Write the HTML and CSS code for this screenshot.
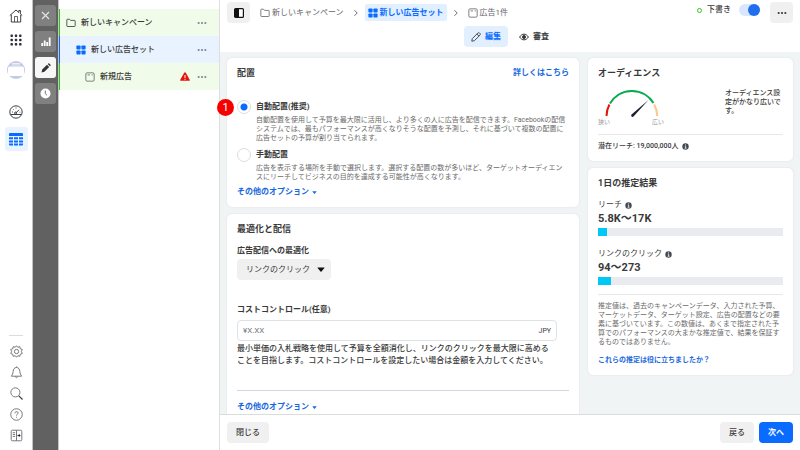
FILE: index.html
```html
<!DOCTYPE html>
<html lang="ja">

<head>
  <title>新しい広告セット</title>
  <meta charset="utf-8" />
  <meta name="viewport" content="width=device-width, initial-scale=1.0" />
  <link rel="stylesheet" href="styles.css">
</head>

<body>
  <svg class="sprite" aria-hidden="true">
    <symbol id="i-folder" viewBox="0 0 12 12">
      <path d="M1 9.5V2.2q0-.7.7-.7h2.6l1.2 1.4h4.8q.7 0 .7.7v5.9q0 .7-.7.7H1.7Q1 10.200 1 9.500z" fill="none" stroke="currentColor" />
    </symbol>
    <symbol id="i-set" viewBox="0 0 12 12">
      <g fill="currentColor">
        <rect x=".5" y=".5" width="5" height="5" rx="1" />
        <rect x="6.500" y=".5" width="5" height="5" rx="1" />
        <rect x=".5" y="6.500" width="5" height="5" rx="1" />
        <rect x="6.500" y="6.500" width="5" height="5" rx="1" />
      </g>
    </symbol>
    <symbol id="i-ad" viewBox="0 0 12 12">
      <rect x="1" y="1" width="10" height="10" rx="1.500" fill="none" stroke="currentColor" />
      <path d="M3 3.500h3M8 3.500h1.500" stroke="currentColor" />
    </symbol>
    <symbol id="i-dots" viewBox="0 0 12 12">
      <g fill="currentColor">
        <circle cx="2" cy="6" r="1.300" />
        <circle cx="6" cy="6" r="1.300" />
        <circle cx="10" cy="6" r="1.300" />
      </g>
    </symbol>
    <symbol id="i-chevron" viewBox="0 0 6 10">
      <path d="M1 1.500L4.500 5 1 8.500" fill="none" stroke="currentColor" stroke-width="1.200" />
    </symbol>
    <symbol id="i-caret" viewBox="0 0 8 5">
      <path d="M.8.5h6.400q.6 0 .2.500L4.500 4.500q-.5.4-1 0L.6 1Q.2.500.8.5z" fill="currentColor" />
    </symbol>
    <symbol id="i-info" viewBox="0 0 12 12">
      <circle cx="6" cy="6" r="5.500" fill="#444950" />
      <path d="M6 2.300v1.700M4.800 5.300H6.300V9M4.500 9h3.200" stroke="#fff" stroke-width="1.300" fill="none" />
    </symbol>
  </svg>

  <nav class="rail">
    <a href="#" class="rail-item" aria-label="ホーム">
      <svg width="14" height="14" viewBox="0 0 14 14" fill="none" stroke="#3b3f45">
        <path d="M.8 6.500L7 1l2.800 2.500V1.500h1.600v3.400l1.800 1.600M2.300 5.800v7.200h9.400V5.800" />
        <path d="M5.500 13V7.500h3V13" stroke-width=".8" />
      </svg>
    </a>
    <a href="#" class="rail-item" aria-label="すべてのツール">
      <svg width="12" height="12" viewBox="0 0 12 12" fill="#2c3036">
        <rect x=".5" y=".5" width="2.400" height="2.400" rx=".6" />
        <rect x="4.800" y=".5" width="2.400" height="2.400" rx=".6" />
        <rect x="9.100" y=".5" width="2.400" height="2.400" rx=".6" />
        <rect x=".5" y="4.800" width="2.400" height="2.400" rx=".6" />
        <rect x="4.800" y="4.800" width="2.400" height="2.400" rx=".6" />
        <rect x="9.100" y="4.800" width="2.400" height="2.400" rx=".6" />
        <rect x=".5" y="9.100" width="2.400" height="2.400" rx=".6" />
        <rect x="4.800" y="9.100" width="2.400" height="2.400" rx=".6" />
        <rect x="9.100" y="9.100" width="2.400" height="2.400" rx=".6" />
      </svg>
    </a>
    <a href="#" class="rail-item rail-account" aria-label="アカウント">
      <svg width="20" height="20" viewBox="0 0 20 20">
        <circle cx="10" cy="10" r="9" fill="#c3cae3" />
        <path d="M6 3.500h8M6 5h8" stroke="#eef0f8" />
        <rect x="2" y="6.500" width="16" height="9.500" rx="1.500" fill="#fff" />
      </svg>
    </a>
    <a href="#" class="rail-item" aria-label="概要">
      <svg width="14" height="14" viewBox="0 0 14 14" fill="none" stroke="#3b3f45">
        <circle cx="7" cy="7" r="6.200" />
        <path d="M1.500 9.500h11M7 7.800l3-3" />
        <path d="M3 7h1M4 4l.7.7M7 2.500v1M10.500 7.200h.8" stroke-width=".9" />
        <circle cx="6.600" cy="8" r="1" />
      </svg>
    </a>
    <a href="#" class="rail-item rail-current" aria-label="キャンペーン" aria-current="page">
      <svg width="14" height="13" viewBox="0 0 14 13" fill="#0a6cff">
        <path d="M0 1q0-1 1-1h12q1 0 1 1v2H0z" />
        <path d="M0 4.300h4v2H0zM5 4.300h4v2H5zM10 4.300h4v2h-4zM0 7.400h4v2H0zM5 7.400h4v2H5zM10 7.400h4v2h-4zM0 10.500h4v2H1q-1 0-1-1zM5 10.500h4v2H5zM10 10.500h4v1q0 1-1 1h-3z" />
      </svg>
    </a>
    <div class="rail-bottom">
      <a href="#" class="rail-item" aria-label="設定">
        <svg width="13" height="13" viewBox="0 0 14 14" fill="none" stroke="#6b7078">
          <path d="M7 .8l1.400 1.700 2.200-.7.4 2.200 2.200.8-.9 2.200.9 2.200-2.200.8-.4 2.200-2.200-.7L7 13.200l-1.400-1.700-2.200.7-.4-2.200-2.200-.8.9-2.200-.9-2.200L3 4l.4-2.200 2.200.7z" stroke-linejoin="round" />
          <circle cx="7" cy="7" r="2.300" />
        </svg>
      </a>
      <a href="#" class="rail-item" aria-label="お知らせ">
        <svg width="13" height="13" viewBox="0 0 14 14" fill="none" stroke="#6b7078">
          <path d="M7 1.500C4.500 1.800 3.600 3.500 3.400 6 3.200 8.500 2.500 9 1.500 11h11c-1-2-1.700-2.500-1.900-5C10.400 3.500 9.500 1.800 7 1.500z" />
          <path d="M5.500 11.300q1.500 2.600 3 0M7 .5v1" />
        </svg>
      </a>
      <a href="#" class="rail-item" aria-label="検索">
        <svg width="13" height="13" viewBox="0 0 14 14" fill="none" stroke="#6b7078">
          <circle cx="5.800" cy="5.800" r="4.900" />
          <path d="M9.500 9.500l4 4" stroke="#3b3f45" stroke-width="1.300" />
        </svg>
      </a>
      <a href="#" class="rail-item" aria-label="ヘルプ">
        <svg width="13" height="13" viewBox="0 0 14 14" fill="none" stroke="#6b7078">
          <circle cx="7" cy="7" r="6.200" />
          <path d="M5.200 5.800C5.200 3.300 8.900 3.400 8.800 5.500 8.700 6.700 7 6.700 7 8.200M7 9.500v1" />
        </svg>
      </a>
      <a href="#" class="rail-item" aria-label="パネル">
        <svg width="13" height="13" viewBox="0 0 14 14" fill="none" stroke="#6b7078">
          <rect x="1.300" y="1.300" width="11.400" height="11.400" rx="1.200" />
          <path d="M7 1.500v11M3 4h2.500M3 6h2.500M3 8h2.500" />
          <path d="M8 7h2" stroke="#222" />
          <path d="M9.500 5.200L11.500 7l-2 1.800z" fill="#222" stroke="none" />
        </svg>
      </a>
    </div>
  </nav>

  <div class="tools">
    <button type="button" class="tool" aria-label="閉じる">
      <svg width="9" height="9" viewBox="0 0 9 9" stroke="#e4e4e4" stroke-width="1.200"><path d="M1 1l7 7M8 1L1 8" /></svg>
    </button>
    <button type="button" class="tool" aria-label="グラフ">
      <svg width="10" height="9" viewBox="0 0 10 9" fill="#fff"><path d="M.3 6h1.800v3H.3zM2.800 3.500h1.800V9H2.800zM5.300 5h1.800v4H5.300zM7.800.5h1.800V9H7.800z" /></svg>
    </button>
    <button type="button" class="tool tool-active" aria-label="編集">
      <svg width="10" height="10" viewBox="0 0 10 10" fill="#333"><path d="M.5 9.500l.7-2.900L6 1.800 8.200 4 3.400 8.800zM6.700 1.100l.6-.6q.5-.4 1 0L9.500 1.700q.4.5 0 1l-.6.6z" /></svg>
    </button>
    <button type="button" class="tool" aria-label="履歴">
      <svg width="11" height="11" viewBox="0 0 11 11"><circle cx="5.500" cy="5.500" r="5" fill="#fff" /><path d="M5.300 2.500v3.200l1.700 1.600" fill="none" stroke="#777" /></svg>
    </button>
  </div>

  <aside class="tree">
    <ul>
      <li class="tree-row">
        <svg class="icon"><use href="#i-folder" /></svg>
        <a href="#">新しいキャンペーン</a>
        <button type="button" class="dots" aria-label="メニュー"><svg class="icon"><use href="#i-dots" /></svg></button>
      </li>
      <li class="tree-row tree-set">
        <svg class="icon"><use href="#i-set" /></svg>
        <a href="#">新しい広告セット</a>
        <button type="button" class="dots" aria-label="メニュー"><svg class="icon"><use href="#i-dots" /></svg></button>
      </li>
      <li class="tree-row tree-ad">
        <svg class="icon"><use href="#i-ad" /></svg>
        <a href="#">新規広告</a>
        <svg class="warning" viewBox="0 0 10 9">
          <path d="M5 .3q.5 0 .8.5l3.900 7q.4 1-.6 1H.9q-1 0-.6-1l3.900-7Q4.500.3 5 .3z" fill="#e3120b" />
          <path d="M5 3v3M5 6.800v1" stroke="#fff" />
        </svg>
        <button type="button" class="dots" aria-label="メニュー"><svg class="icon"><use href="#i-dots" /></svg></button>
      </li>
    </ul>
  </aside>

  <main>
    <header>
      <div class="topbar">
        <button type="button" class="btn btn-icon" aria-label="サイドバー">
          <svg width="10" height="10" viewBox="0 0 10 10"><rect x=".6" y=".6" width="8.800" height="8.800" rx="1" fill="#fff" stroke="#111" stroke-width="1.200" /><path d="M1 1h4v8H1z" fill="#111" /></svg>
        </button>
        <nav class="crumbs">
          <a href="#"><svg class="icon"><use href="#i-folder" /></svg>新しいキャンペーン</a>
          <svg class="chevron"><use href="#i-chevron" /></svg>
          <a href="#" class="crumb-current"><svg class="icon"><use href="#i-set" /></svg>新しい広告セット</a>
          <svg class="chevron"><use href="#i-chevron" /></svg>
          <a href="#"><svg class="icon"><use href="#i-ad" /></svg>広告1件</a>
        </nav>
        <label class="status"><span class="ring"></span>下書き<input type="checkbox" class="toggle" checked></label>
        <button type="button" class="btn btn-icon" aria-label="その他"><svg class="icon"><use href="#i-dots" /></svg></button>
      </div>
      <div class="tabs">
        <button type="button" class="tab tab-active">
          <svg width="10" height="10" viewBox="0 0 10 10" fill="none" stroke="#4b4f56"><path d="M.8 9.200l.5-2.600L6.900 1q.8-.7 1.600 0l.5.500q.7.8 0 1.600L3.400 8.700zM5.900 2l2.100 2.100" /></svg>
          編集
        </button>
        <button type="button" class="tab">
          <svg width="10" height="10" viewBox="0 0 10 10" fill="none" stroke="#333"><path d="M.6 5C3 1.200 7 1.200 9.400 5 7 8.800 3 8.800.6 5z" /><circle cx="5" cy="5" r="1.500" fill="#333" /></svg>
          審査
        </button>
      </div>
    </header>

    <div class="content">
      <div class="column">
        <section class="card">
          <div class="card-head">
            <h2>配置</h2>
            <a href="#" class="link">詳しくはこちら</a>
          </div>
          <div class="option option-first">
            <span class="badge">1</span>
            <input type="radio" name="placement" id="auto" checked>
            <div>
              <label for="auto">自動配置(推奨)</label>
              <p>自動配置を使用して予算を最大限に活用し、より多くの人に広告を配信できます。Facebookの配信<br>システムでは、最もパフォーマンスが高くなりそうな配置を予測し、それに基づいて複数の配置に<br>広告セットの予算が割り当てられます。</p>
            </div>
          </div>
          <div class="option">
            <input type="radio" name="placement" id="manual">
            <div>
              <label for="manual">手動配置</label>
              <p>広告を表示する場所を手動で選択します。選択する配置の数が多いほど、ターゲットオーディエン<br>スにリーチしてビジネスの目的を達成する可能性が高くなります。</p>
            </div>
          </div>
          <a href="#" class="link more">その他のオプション<svg class="caret"><use href="#i-caret" /></svg></a>
        </section>

        <section class="card">
          <h2>最適化と配信</h2>
          <label class="field-label" for="goal">広告配信への最適化</label>
          <div class="select">
            <select id="goal">
              <option>リンクのクリック</option>
            </select>
            <svg class="select-arrow"><use href="#i-caret" /></svg>
          </div>
          <label class="field-label field-cost" for="cost">コストコントロール(任意)</label>
          <div class="money">
            <input type="text" id="cost" placeholder="¥X.XX">
            <span>JPY</span>
          </div>
          <p class="hint">最小単価の入札戦略を使用して予算を全額消化し、リンクのクリックを最大限に高める<br>ことを目指します。コストコントロールを設定したい場合は金額を入力してください。</p>
          <hr>
          <a href="#" class="link more">その他のオプション<svg class="caret"><use href="#i-caret" /></svg></a>
        </section>
      </div>

      <div class="column">
        <section class="card">
          <h2>オーディエンス</h2>
          <div class="audience">
            <div class="gauge">
              <svg width="66" height="30" viewBox="0 0 66 30" fill="none" stroke-width="2">
                <path d="M8.500 28A25.500 25.500 0 0 1 11.400 16.500" stroke="#e3120b" />
                <path d="M12 15.500A25.500 25.500 0 0 1 55.500 15" stroke="#0aa84f" />
                <path d="M56.200 16.500A25.500 25.500 0 0 1 59.300 28" stroke="#fdc68a" />
                <path d="M50.500 12L35.500 28.500q-1.300.8-2 0-.8-.9 0-2z" fill="#1c2233" />
              </svg>
              <div class="gauge-labels"><span>狭い</span><span>広い</span></div>
            </div>
            <p>オーディエンス設定がかなり広いです。</p>
          </div>
          <div class="reach">潜在リーチ: 19,000,000人<svg class="info"><use href="#i-info" /></svg></div>
        </section>

        <section class="card">
          <h2>1日の推定結果</h2>
          <div class="metric">
            <div class="metric-name">リーチ<svg class="info"><use href="#i-info" /></svg></div>
            <strong>5.8K〜17K</strong>
            <div class="bar"><div style="width: 5%"></div></div>
          </div>
          <div class="metric">
            <div class="metric-name">リンクのクリック<svg class="info"><use href="#i-info" /></svg></div>
            <strong>94〜273</strong>
            <div class="bar"><div style="width: 7%"></div></div>
          </div>
          <p class="note">推定値は、過去のキャンペーンデータ、入力された予算、マーケットデータ、ターゲット設定、広告の配置などの要素に基づいています。この数値は、あくまで指定された予算でのパフォーマンスの大まかな推定値で、結果を保証するものではありません。</p>
          <a href="#" class="link link-small">これらの推定は役に立ちましたか？</a>
        </section>
      </div>
    </div>

    <footer>
      <button type="button" class="btn">閉じる</button>
      <button type="button" class="btn btn-back">戻る</button>
      <button type="button" class="btn btn-primary">次へ</button>
    </footer>
  </main>
</body>

</html>
```
FILE: styles.css
```css
* {
  box-sizing: border-box;
}

body {
  margin: 0;
  display: flex;
  height: 100vh;
  overflow: hidden;
  font-family: Roboto, "Noto Sans CJK JP", sans-serif;
  font-size: 8px;
  line-height: 12px;
  color: #3a3a3a;
  background: white;
}

h2,
p,
ul {
  margin: 0;
  padding: 0;
}

h2 {
  font-size: 9px;
  line-height: 12px;
  font-weight: 700;
}

a {
  color: inherit;
  text-decoration: none;
}

button,
input,
select {
  font: inherit;
  color: inherit;
  border: 0;
  margin: 0;
  padding: 0;
  background: none;
}

svg {
  display: block;
  flex: none;
}

.sprite {
  position: absolute;
  width: 0;
  height: 0;
}

.icon {
  width: 10px;
  height: 10px;
}

/* left navigation */
.rail {
  flex: none;
  width: 33px;
  padding: 4px 5px;
  display: flex;
  flex-direction: column;
  align-items: center;
  border-right: 1px solid #c4c4c4;
}

.rail-item {
  width: 23px;
  height: 24px;
  display: flex;
  align-items: center;
  justify-content: center;
  border-radius: 3px;
}

.rail-account {
  margin: 6px 0 18px;
}

.rail-current {
  margin-top: 3px;
  background: #e9f2ff;
}

.rail-bottom {
  margin-top: auto;
  padding-top: 5px;
  border-top: 1px solid #dcdcdc;
  display: flex;
  flex-direction: column;
  align-items: center;
  width: 14px;
}

.rail-bottom .rail-item {
  height: 21px;
}

.tools {
  flex: none;
  width: 26px;
  padding-top: 5px;
  display: flex;
  flex-direction: column;
  align-items: center;
  gap: 5px;
  background: #616161;
  border-right: 1px solid #c4c4c4;
}

.tool {
  width: 21px;
  height: 21px;
  display: flex;
  align-items: center;
  justify-content: center;
  border-radius: 3px;
  background: #808080;
}

.tool-active {
  background: #f7f7f7;
}

/* campaign tree */
.tree {
  flex: none;
  width: 161px;
  padding-top: 9px;
  border-right: 1px solid #dedede;
}

.tree-row {
  display: flex;
  align-items: center;
  gap: 5px;
  height: 27px;
  padding: 0 12px 0 6px;
  border-left: 1px solid #31c41a;
  background: #f0fce9;
  font-weight: 500;
}

.tree-row a {
  flex: 1;
}

.tree-set {
  padding-left: 16px;
  border-color: #0a6cff;
  background: #e9f3ff;
}

.tree-set > .icon {
  color: #0a6cff;
}

.tree-ad {
  padding-left: 25px;
}

.tree-ad > .icon {
  color: #666;
}

.warning {
  width: 10px;
  height: 9px;
  margin-right: 2px;
}

.dots {
  color: #7b8794;
}

main {
  flex: 1;
  min-width: 0;
  display: flex;
  flex-direction: column;
}

header {
  flex: none;
  padding: 2px 7px 5px;
}

.topbar {
  display: flex;
  align-items: center;
}

.btn {
  height: 21px;
  padding: 0 9px;
  border-radius: 4px;
  background: #f0f0f0;
  font-weight: 500;
}

.btn-icon {
  width: 23px;
  padding: 0;
  display: flex;
  align-items: center;
  justify-content: center;
}

.crumbs {
  flex: 1;
  display: flex;
  align-items: center;
  gap: 6px;
  padding-left: 7px;
  color: #65676b;
}

.crumbs a {
  display: flex;
  align-items: center;
  gap: 2px;
  padding: 0 3px;
}

.crumbs .crumb-current {
  height: 17px;
  border-radius: 2px;
  background: #e1efff;
  color: #0a6cff;
  font-weight: 700;
}

.chevron {
  width: 6px;
  height: 8px;
}

.status {
  display: flex;
  align-items: center;
  height: 12px;
  margin: 0 10px 5px 0;
  font-weight: 500;
}

.ring {
  width: 5px;
  height: 5px;
  margin-right: 5px;
  border: 1px solid #31c41a;
  border-radius: 50%;
}

.toggle {
  appearance: none;
  width: 21px;
  height: 12px;
  margin-left: 8px;
  border-radius: 6px;
  background: #d8e7ff;
}

.toggle::before {
  content: "";
  display: block;
  width: 12px;
  height: 12px;
  border-radius: 50%;
  background: #216fed;
}

.toggle:checked::before {
  margin-left: 9px;
}

.tabs {
  display: flex;
  justify-content: center;
  gap: 4px;
  margin-top: 3px;
}

.tab {
  display: flex;
  align-items: center;
  gap: 4px;
  height: 21px;
  padding: 0 7px;
  border-radius: 4px;
  font-weight: 700;
}

.tab-active {
  background: #e1efff;
  color: #0a6cff;
}

/* clipped at the footer, but the step badge may hang out on the left */
.content {
  flex: 1;
  min-height: 0;
  clip-path: inset(0 0 0 -12px);
  display: grid;
  grid-template-columns: minmax(0, 1fr) 205px;
  align-items: start;
  gap: 9px;
  padding: 6px 7px 0;
  background: #f1f4f4;
}

.column {
  display: flex;
  flex-direction: column;
  gap: 7px;
}

.card {
  padding: 9px 10px;
  border-radius: 5px;
  background: white;
  box-shadow: 0 0 2px rgba(0, 0, 0, 0.1);
}

.card-head {
  display: flex;
  justify-content: space-between;
  margin-bottom: 22px;
}

.link {
  color: #1868e0;
  font-weight: 700;
}

.link-small {
  font-size: 7px;
}

.option {
  position: relative;
  display: flex;
  gap: 5px;
  margin-bottom: 4px;
}

.option-first {
  margin-bottom: 6px;
}

.option label {
  display: block;
  font-weight: 700;
}

.option p {
  margin-top: 3px;
  font-size: 7px;
  line-height: 9px;
  color: #6b6b6b;
}

.option input {
  appearance: none;
  flex: none;
  width: 14px;
  height: 14px;
  margin-top: -1px;
  border: 1px solid #ddd;
  border-radius: 50%;
}

.option input:checked {
  background: radial-gradient(circle, #0a6cff 3px, white 4px);
}

/* step number over the card edge */
.badge {
  position: absolute;
  left: -20px;
  top: -2px;
  width: 17px;
  height: 17px;
  border-radius: 50%;
  background: #f80000;
  color: white;
  font-size: 11px;
  line-height: 17px;
  text-align: center;
}

.more {
  display: flex;
  align-items: center;
  gap: 3px;
}

.caret {
  width: 5px;
  height: 3px;
}

.field-label {
  display: block;
  margin-top: 10px;
  font-weight: 700;
}

.select {
  position: relative;
  width: 94px;
  margin-top: 2px;
}

.select select {
  appearance: none;
  display: block;
  width: 100%;
  height: 21px;
  padding-left: 9px;
  border-radius: 4px;
  background: #f0f0f0;
}

.select-arrow {
  position: absolute;
  right: 6px;
  top: 8px;
  width: 8px;
  height: 5px;
  color: #111;
  pointer-events: none;
}

.field-cost {
  margin-top: 24px;
}

.money {
  display: flex;
  align-items: center;
  height: 21px;
  margin: 4px 12px 2px 0;
  padding: 0 5px;
  border: 1px solid #dfe1e4;
  border-radius: 4px;
  font-size: 7px;
}

.money input {
  flex: 1;
  font-size: 8px;
}

.money input::placeholder {
  color: #777;
}

.hint {
  font-weight: 500;
}

hr {
  height: 1px;
  margin: 23px 0 10px;
  border: 0;
  background: #d3d6de;
}

.audience {
  display: flex;
  justify-content: space-between;
  margin-top: 9px;
}

.audience p {
  width: 58px;
  padding-top: 1px;
  font-size: 7px;
  line-height: 9px;
  font-weight: 500;
}

.gauge-labels {
  display: flex;
  justify-content: space-between;
  font-size: 6px;
  line-height: 8px;
  color: #999;
}

.reach {
  display: flex;
  align-items: center;
  gap: 3px;
  margin-top: 8px;
  padding-top: 5px;
  border-top: 1px solid #e8e8e8;
  font-size: 7px;
  font-weight: 500;
}

.info {
  width: 7px;
  height: 7px;
}

.metric {
  margin-top: 10px;
}

.metric + .metric {
  margin-top: 12px;
}

.metric-name {
  display: flex;
  align-items: center;
  gap: 3px;
}

.metric strong {
  display: block;
  font-size: 11px;
  line-height: 16px;
}

.bar {
  height: 8px;
  margin-top: 1px;
  background: #e9ebee;
}

.bar div {
  height: 100%;
  background: #00c8f5;
}

.note {
  margin: 9px 0 7px;
  padding-top: 7px;
  border-top: 1px solid #e8e8e8;
  font-size: 7px;
  line-height: 9px;
  color: #6b6b6b;
}

footer {
  flex: none;
  display: flex;
  gap: 5px;
  padding: 7px;
  border-top: 1px solid #dcdcdc;
}

.btn-back {
  margin-left: auto;
}

.btn-primary {
  background: #0a6cff;
  color: white;
  font-weight: 700;
}
```
